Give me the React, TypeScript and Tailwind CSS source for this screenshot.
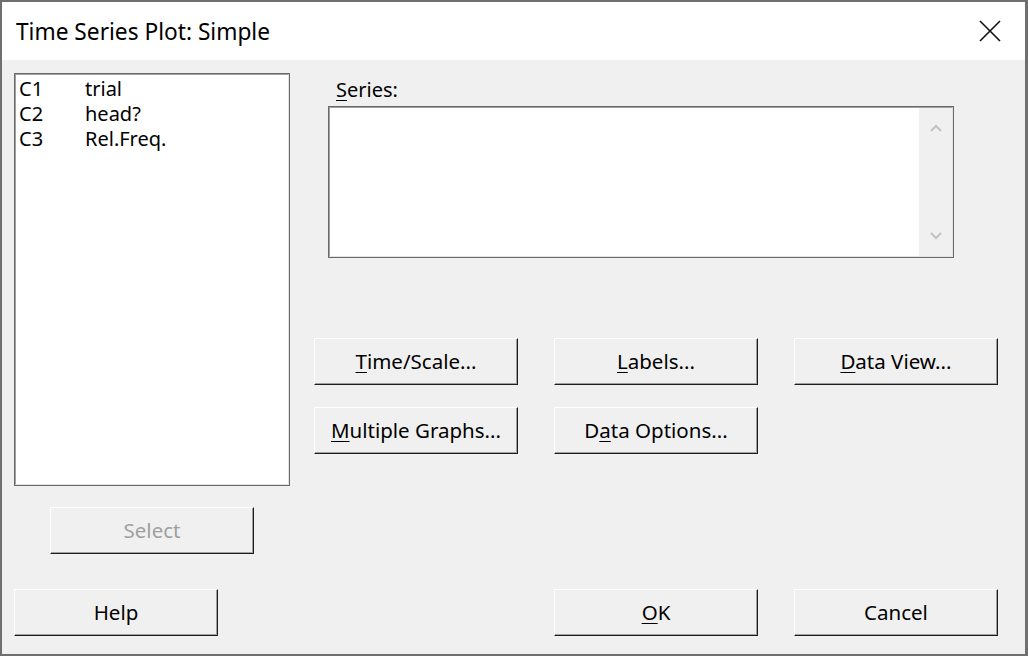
import React from 'react';

const FONT = { fontFamily: '"Noto Sans", "Open Sans", Arial, sans-serif' };

function Btn({ children, disabled }: { children: React.ReactNode; disabled?: boolean }) {
  return (
    <button
      className={
        'w-[204px] h-[47px] flex items-center justify-center bg-[#f0f0f0] border-t border-l border-white border-r border-b border-r-[#1e1e1e] border-b-[#1e1e1e] shadow-[inset_-1px_-1px_0_#a0a0a0] text-[20.5px] ' +
        (disabled ? 'text-[#a0a0a0]' : 'text-black')
      }
    >
      {children}
    </button>
  );
}

function U({ children }: { children: React.ReactNode }) {
  return <span className="underline underline-offset-[3px] decoration-1">{children}</span>;
}

const columns = [
  ['C1', 'trial'],
  ['C2', 'head?'],
  ['C3', 'Rel.Freq.'],
];

export default function App() {
  return (
    <div className="w-[1028px] h-[660px] bg-white" style={FONT}>
      <div className="w-[1028px] h-[656px] border-2 border-r-[3px] border-[#6f6f6f] flex flex-col bg-[#f0f0f0]">
        {/* title bar */}
        <div className="h-[58px] bg-white flex items-center justify-between pl-[14px] pr-[24px]">
          <span className="text-[22.7px] text-black mt-[3px]">Time Series Plot: Simple</span>
          <svg width="22" height="22" viewBox="0 0 22 22" className="mt-[-1px]">
            <path d="M1 1 L21 21 M21 1 L1 21" stroke="#111" strokeWidth="1.6" />
          </svg>
        </div>

        {/* body */}
        <div className="flex-1 flex flex-col pl-[12px] pt-[13px]">
          <div className="flex gap-[24px]">
            {/* left column */}
            <div className="w-[276px] flex flex-col items-center">
              <div className="w-[276px] h-[413px] border border-[#6a6a6a] bg-white">
                <div className="w-full h-full border border-t-[#a0a0a0] border-l-[#a0a0a0] border-r-[#e3e3e3] border-b-[#e3e3e3] pt-[1px] pl-[3px]">
                  {columns.map(([c, n]) => (
                    <div key={c} className="flex h-[25px] items-center text-[20px] text-black">
                      <span className="w-[66px]">{c}</span>
                      <span>{n}</span>
                    </div>
                  ))}
                </div>
              </div>
              <div className="mt-[21px]">
                <Btn disabled>Select</Btn>
              </div>
            </div>

            {/* right column */}
            <div className="flex flex-col">
              <div className="pl-[14px]">
                <div className="mt-[5px] h-[24px] pl-[8px] flex items-center text-[20px] text-black">
                  <U>S</U>eries:
                </div>
                <div className="mt-[4px] w-[626px] h-[152px] border border-[#6a6a6a] bg-white">
                  <div className="w-full h-full border border-t-[#a0a0a0] border-l-[#a0a0a0] border-r-[#e3e3e3] border-b-[#e3e3e3] flex justify-end">
                    <div className="w-[33px] h-full bg-[#f0f0f0] flex flex-col items-center justify-between py-[16px]">
                      <svg width="12" height="8" viewBox="0 0 12 8">
                        <path d="M1 7 L6 2 L11 7" stroke="#c2c2c2" strokeWidth="2" fill="none" />
                      </svg>
                      <svg width="12" height="8" viewBox="0 0 12 8">
                        <path d="M1 1 L6 6 L11 1" stroke="#c2c2c2" strokeWidth="2" fill="none" />
                      </svg>
                    </div>
                  </div>
                </div>
              </div>

              <div className="mt-[80px] grid grid-cols-[204px_204px_204px] gap-x-[36px] gap-y-[22px]">
                <Btn>
                  <U>T</U>ime/Scale...
                </Btn>
                <Btn>
                  <U>L</U>abels...
                </Btn>
                <Btn>
                  <U>D</U>ata View...
                </Btn>
                <Btn>
                  <U>M</U>ultiple Graphs...
                </Btn>
                <Btn>
                  D<U>a</U>ta Options...
                </Btn>
              </div>
            </div>
          </div>

          {/* bottom row */}
          <div className="mt-[35px] flex">
            <Btn>Help</Btn>
            <div className="ml-[336px] flex gap-[36px]">
              <Btn>
                <U>O</U>K
              </Btn>
              <Btn>Cancel</Btn>
            </div>
          </div>
        </div>
      </div>
    </div>
  );
}
